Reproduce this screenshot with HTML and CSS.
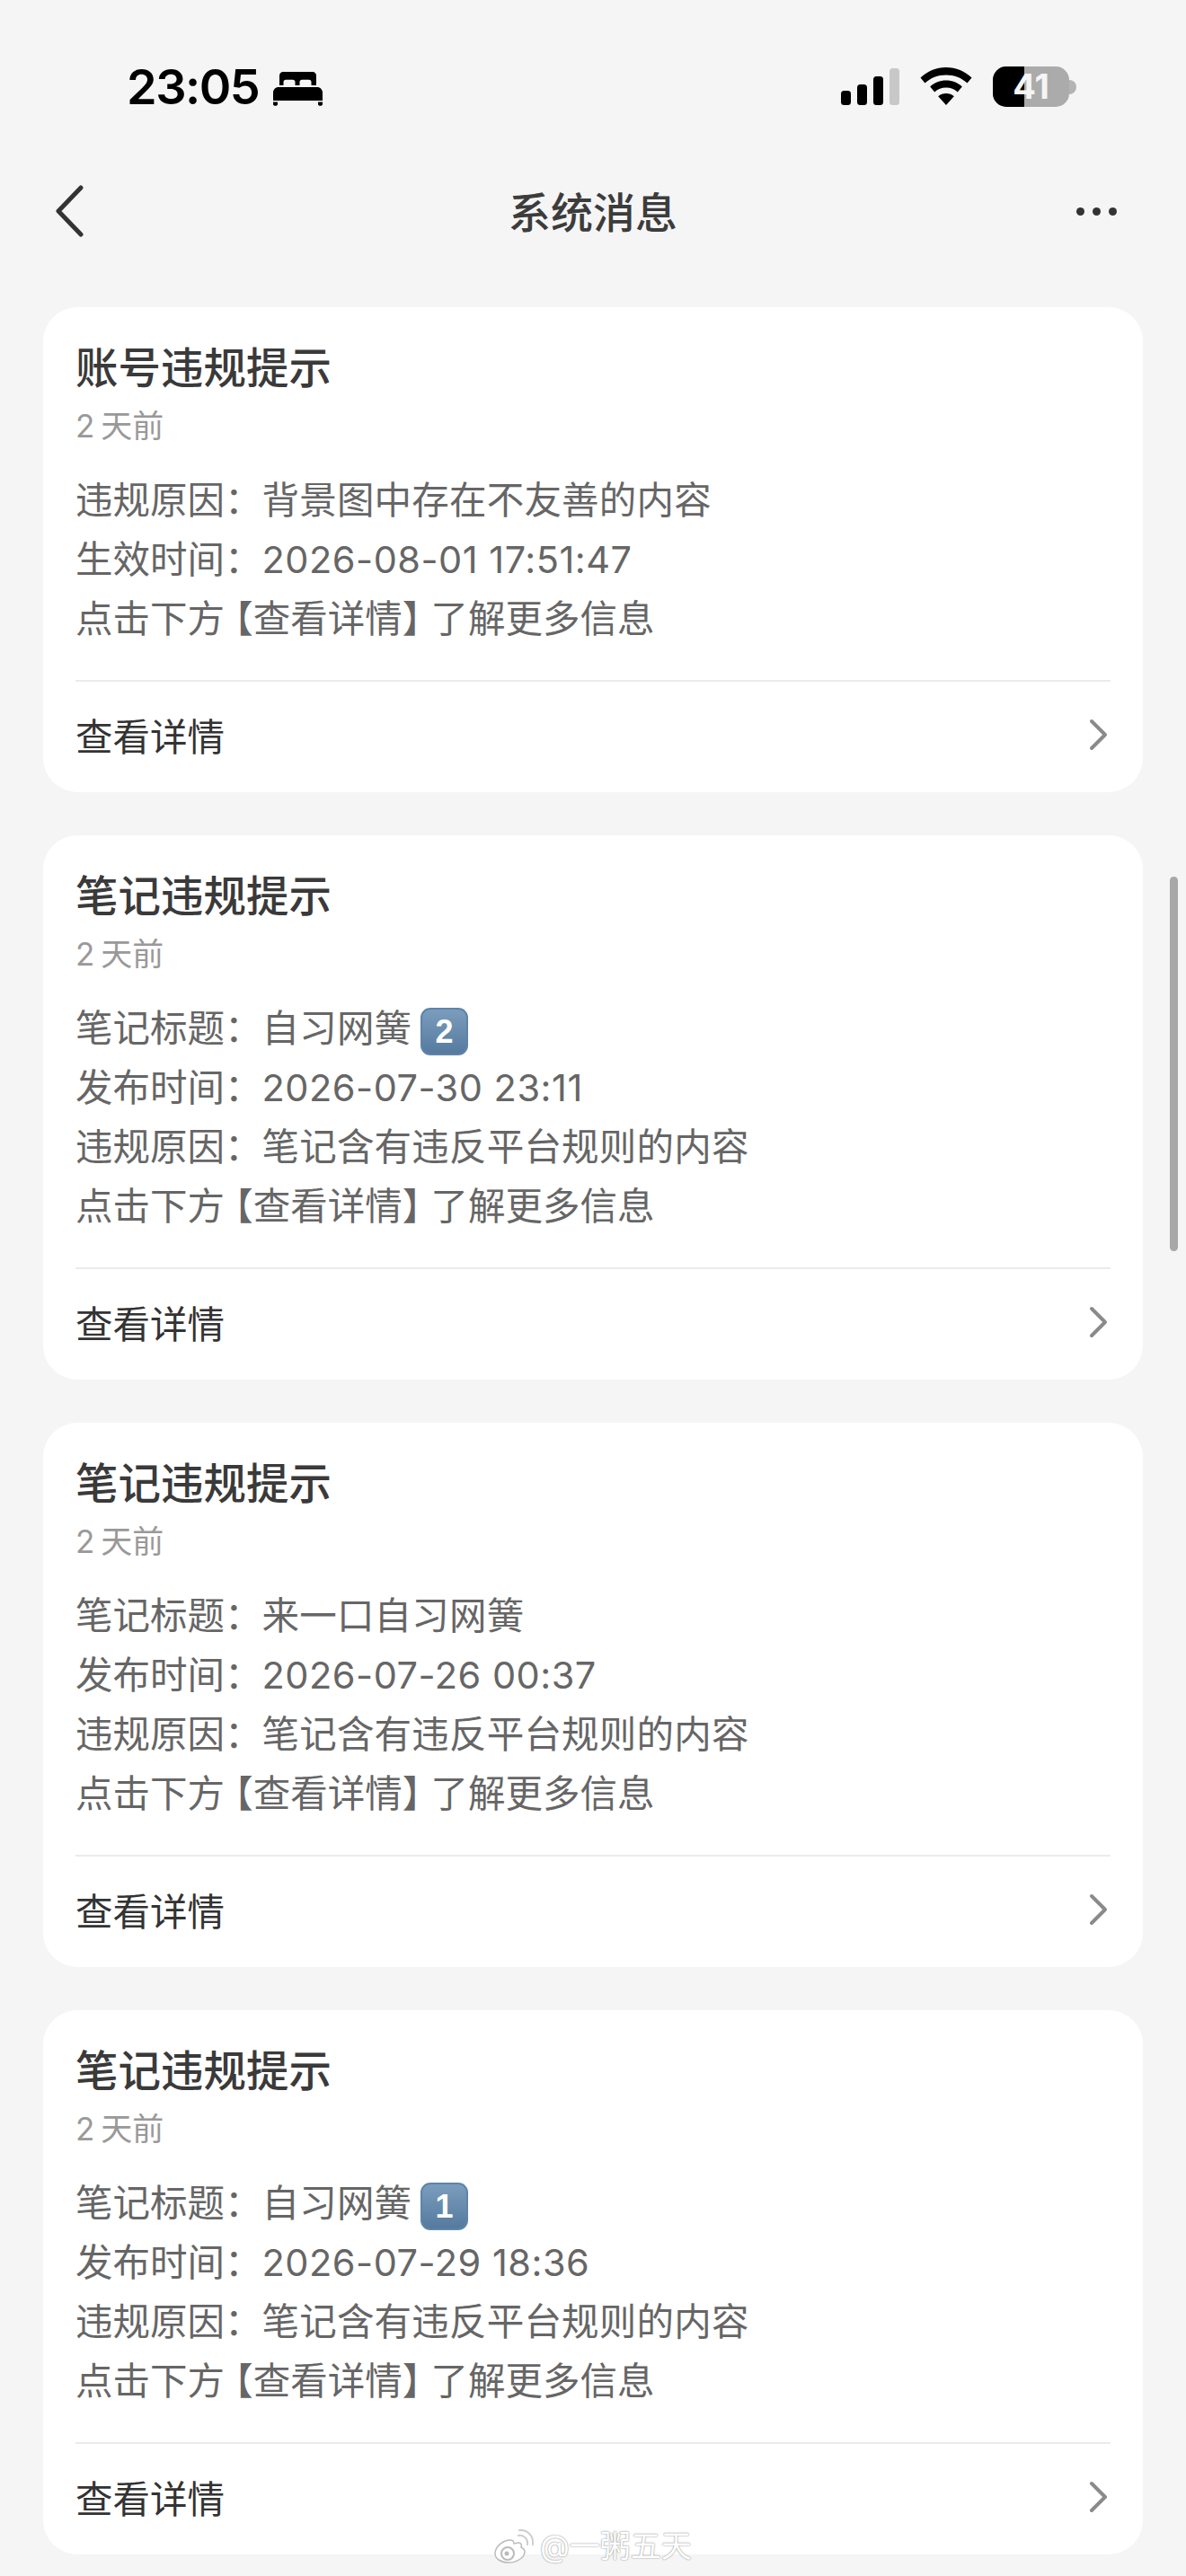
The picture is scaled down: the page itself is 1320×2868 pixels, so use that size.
FILE: index.html
```html
<!DOCTYPE html>
<html lang="zh-CN">
<head>
<meta charset="utf-8">
<title>系统消息</title>
<link rel="stylesheet" href="styles.css">
</head>
<body>
<div class="screen">
  <header class="status">
    <div class="status-left">
      <span class="clock">23:05</span>
      <svg class="bed" viewBox="0 0 55 38" width="55" height="38"><path fill="#000" fill-rule="evenodd" d="M7 4C7 1.800 8.800 0 11 0h33c2.200 0 4 1.800 4 4v11h-5.500v-3.500c0-1.700-1-2.700-2.700-2.700h-7.600c-1.700 0-2.700 1-2.700 2.700V15h-5v-3.500c0-1.700-1-2.700-2.700-2.700h-7.600c-1.700 0-2.700 1-2.700 2.700V15H7Z"/><path fill="#000" d="M6 17h43c3.300 0 6 2.700 6 6v9H0v-9c0-3.300 2.700-6 6-6ZM0 33.500h5V36c0 1-.9 1.800-2.500 1.800S0 37 0 36Zm50 0h5V36c0 1-.9 1.800-2.500 1.800S50 37 50 36Z"/></svg>
    </div>
    <div class="status-right">
      <svg class="signal" viewBox="0 0 65 41" width="65" height="41"><rect x="0" y="25" width="11" height="16" rx="3.500"/><rect x="18" y="18" width="11" height="23" rx="3.500"/><rect x="36" y="9" width="11" height="32" rx="3.500"/><rect class="dim" x="54" y="0" width="11" height="41" rx="3.500"/></svg>
      <svg class="wifi" viewBox="0 0 58 42" width="58" height="42"><path d="M29 0c11 0 21 4.300 28.500 11.500l-5 6C46.300 11.700 38 8.500 29 8.500S11.700 11.700 5.500 17.500l-5-6C8 4.300 18 0 29 0Z"/><path d="M29 14.500c6.800 0 13 2.600 17.800 6.900l-5 6C38.300 24.300 33.900 22.500 29 22.500s-9.300 1.800-12.800 4.900l-5-6C16 17.100 22.200 14.500 29 14.500Z"/><path d="M29 29c3.300 0 6.400 1.200 8.800 3.200L29 42l-8.800-9.800C22.600 30.200 25.700 29 29 29Z"/></svg>
      <div class="battery">
        <div class="battery-body"><span class="battery-fill"></span><span class="battery-num">41</span></div>
        <span class="battery-nub"></span>
      </div>
    </div>
  </header>

  <nav class="nav">
    <svg class="nav-back" viewBox="0 0 34 60" width="34" height="60"><path d="M30 4 5 30l25 26" fill="none" stroke="#333" stroke-width="5" stroke-linecap="round" stroke-linejoin="round"/></svg>
    <h1 class="nav-title">系统消息</h1>
    <div class="nav-more"><i></i><i></i><i></i></div>
  </nav>

  <main class="list">
    <article class="card">
      <h2 class="card-title">账号违规提示</h2>
      <p class="card-time">2 天前</p>
      <div class="card-body">
        <p>违规原因：<span class="val">背景图中存在不友善的内容</span></p>
        <p>生效时间：<span class="val num">2026-08-01 17:51:47</span></p>
        <p>点击下方<span class="br-l">【</span>查看详情<span class="br-r">】</span>了解更多信息</p>
      </div>
      <div class="card-foot"><span>查看详情</span><svg class="chev" viewBox="0 0 22 36" width="22" height="36"><path d="M3 3l15 15L3 33" fill="none" stroke="#8a8a8a" stroke-width="4" stroke-linecap="round" stroke-linejoin="round"/></svg></div>
    </article>

    <article class="card">
      <h2 class="card-title">笔记违规提示</h2>
      <p class="card-time">2 天前</p>
      <div class="card-body">
        <p>笔记标题：<span class="val">自习网簧 <b class="keycap">2</b></span></p>
        <p>发布时间：<span class="val num">2026-07-30 23:11</span></p>
        <p>违规原因：<span class="val">笔记含有违反平台规则的内容</span></p>
        <p>点击下方<span class="br-l">【</span>查看详情<span class="br-r">】</span>了解更多信息</p>
      </div>
      <div class="card-foot"><span>查看详情</span><svg class="chev" viewBox="0 0 22 36" width="22" height="36"><path d="M3 3l15 15L3 33" fill="none" stroke="#8a8a8a" stroke-width="4" stroke-linecap="round" stroke-linejoin="round"/></svg></div>
    </article>

    <article class="card">
      <h2 class="card-title">笔记违规提示</h2>
      <p class="card-time">2 天前</p>
      <div class="card-body">
        <p>笔记标题：<span class="val">来一口自习网簧</span></p>
        <p>发布时间：<span class="val num">2026-07-26 00:37</span></p>
        <p>违规原因：<span class="val">笔记含有违反平台规则的内容</span></p>
        <p>点击下方<span class="br-l">【</span>查看详情<span class="br-r">】</span>了解更多信息</p>
      </div>
      <div class="card-foot"><span>查看详情</span><svg class="chev" viewBox="0 0 22 36" width="22" height="36"><path d="M3 3l15 15L3 33" fill="none" stroke="#8a8a8a" stroke-width="4" stroke-linecap="round" stroke-linejoin="round"/></svg></div>
    </article>

    <article class="card">
      <h2 class="card-title">笔记违规提示</h2>
      <p class="card-time">2 天前</p>
      <div class="card-body">
        <p>笔记标题：<span class="val">自习网簧 <b class="keycap">1</b></span></p>
        <p>发布时间：<span class="val num">2026-07-29 18:36</span></p>
        <p>违规原因：<span class="val">笔记含有违反平台规则的内容</span></p>
        <p>点击下方<span class="br-l">【</span>查看详情<span class="br-r">】</span>了解更多信息</p>
      </div>
      <div class="card-foot"><span>查看详情</span><svg class="chev" viewBox="0 0 22 36" width="22" height="36"><path d="M3 3l15 15L3 33" fill="none" stroke="#8a8a8a" stroke-width="4" stroke-linecap="round" stroke-linejoin="round"/></svg></div>
    </article>
  </main>

  <div class="scrollbar"></div>

  <div class="watermark">
    <svg class="wb" viewBox="0 0 46 40" width="46" height="40"><path d="M19 13C10 13 2 21 2 28c0 6 7 10 15 10 10 0 18-6 18-12 0-3-2-4-4-5 1-3 0-5-3-5-2 0-4 1-5 1 0-2-1-4-4-4Z" fill="#fff" stroke="#bbb" stroke-width="1.500"/><circle cx="16" cy="28" r="7" fill="#fff" stroke="#bbb" stroke-width="2"/><circle cx="15" cy="28" r="2.500" fill="#bbb"/><path d="M28 8c6-1 11 4 10 10M29 2c9-1 16 6 15 16" fill="none" stroke="#ccc" stroke-width="2" stroke-linecap="round"/></svg>
    <span>@一粥五天</span>
  </div>
</div>
</body>
</html>
```
FILE: styles.css
```css
* { box-sizing: border-box; }
html, body { margin: 0; padding: 0; }
body {
  width: 1320px;
  height: 2868px;
  overflow: hidden;
  background: #f5f5f5;
  font-family: Inter, "Noto Sans CJK SC", sans-serif;
}
.screen { position: relative; width: 1320px; height: 2868px; overflow: hidden; }

.status {
  height: 185px;
  display: flex;
  justify-content: space-between;
  padding: 74px 122px 0 141px;
}
.status-left { display: flex; align-items: flex-start; gap: 16px; height: 46px; }
.clock { font-size: 54px; line-height: 46px; font-weight: 600; color: #000; letter-spacing: -1.500px; }
.bed { margin-top: 6px; }
.status-right { display: flex; align-items: flex-start; height: 46px; }
.signal { margin-top: 2px; fill: #000; }
.signal .dim { fill: #c8c8c8; }
.wifi { margin: 1px 0 0 23px; fill: #000; }
.battery { display: flex; align-items: center; margin-left: 23px; height: 45px; }
.battery-body {
  position: relative;
  width: 85px;
  height: 45px;
  border-radius: 15px;
  background: #ababab;
  overflow: hidden;
}
.battery-fill { display: block; width: 35px; height: 45px; background: #000; }
.battery-num {
  position: absolute;
  inset: 0;
  text-align: center;
  font-size: 38px;
  line-height: 45px;
  font-weight: 700;
  color: #f5f5f5;
}
.battery-nub { width: 8px; height: 16px; background: #b4b4b4; border-radius: 0 8px 8px 0; }

.nav {
  height: 100px;
  display: grid;
  grid-template-columns: 1fr auto 1fr;
  align-items: center;
  padding: 0 60px;
}
.nav-title {
  margin: 0 0 2px;
  font-size: 47px;
  line-height: 60px;
  font-weight: 500;
  color: #3c3c3c;
  font-family: "Noto Sans CJK SC", sans-serif;
}
.nav-more { display: flex; gap: 9px; justify-self: end; margin-right: 17px; }
.nav-more i { display: block; width: 9px; height: 9px; border-radius: 50%; background: #333; }

.list { display: flex; flex-direction: column; gap: 48px; padding: 57px 48px 0; }
.card { background: #fff; border-radius: 38px; padding: 35px 36px 0; }
.card-title {
  margin: 0;
  font-size: 47.500px;
  line-height: 60px;
  font-weight: 500;
  color: #3a3a3a;
  font-family: "Noto Sans CJK SC", sans-serif;
}
.card-time { margin: 15px 0 0; font-size: 35px; line-height: 44px; color: #999; word-spacing: -3px; }
.card-body { margin-top: 28px; font-size: 41.500px; line-height: 66px; color: #666; }
.card-body p { margin: 0; white-space: nowrap; height: 66px; }
.val { letter-spacing: .2px; }
.num { letter-spacing: .5px; }
.br-l { font-feature-settings: "halt"; padding-left: 11px; }
.br-r { font-feature-settings: "halt"; padding-right: 11px; }
.keycap {
  display: inline-block;
  width: 53px;
  height: 53px;
  margin: -10px 0 -10px -2px;
  vertical-align: -1px;
  border-radius: 11px;
  background: linear-gradient(#7b9dbd, #557a9e);
  border: 2px solid #5f84a8;
  color: #fff;
  font: 700 36px/49px "Liberation Sans", sans-serif;
  text-align: center;
}
.card-foot {
  margin-top: 35px;
  height: 125px;
  padding-bottom: 6px;
  border-top: 2px solid #ebebeb;
  display: flex;
  align-items: center;
  justify-content: space-between;
  font-size: 41.500px;
  color: #333;
}
.chev { margin-right: 2px; }

.scrollbar {
  position: absolute;
  left: 1302px;
  top: 976px;
  width: 9px;
  height: 417px;
  border-radius: 5px;
  background: #a8a8a8;
}
.watermark {
  position: absolute;
  left: 549px;
  top: 2815px;
  display: flex;
  align-items: center;
  gap: 6px;
  font-size: 34px;
  line-height: 40px;
  color: #fff;
  text-shadow: 0 0 2px #999, 0 0 1px #999;
}
```
